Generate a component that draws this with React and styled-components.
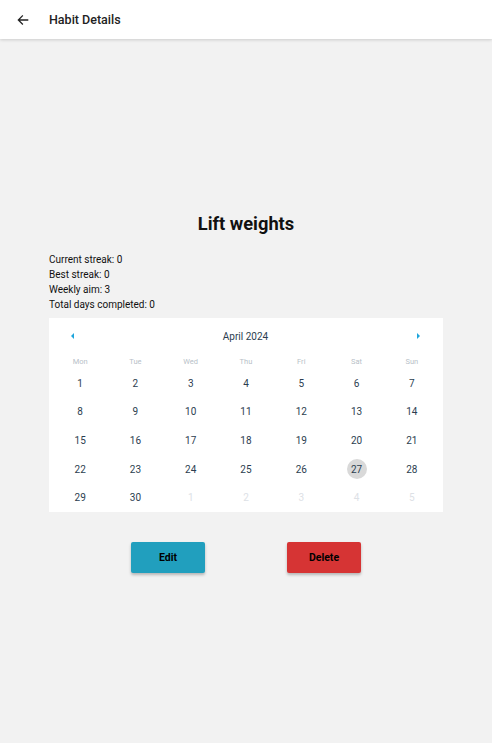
import React from "react";
import styled, { createGlobalStyle } from "styled-components";

const Global = createGlobalStyle`
  html, body { margin: 0; padding: 0; background: #f2f2f2; }
  body { font-family: Roboto, "Noto Sans", Arial, sans-serif; }
  * { box-sizing: border-box; }
`;

const Page = styled.div`
  width: 492px;
  min-height: 743px;
  background: #f2f2f2;
`;

const Header = styled.header`
  height: 39px;
  background: #fff;
  display: flex;
  align-items: center;
  padding-left: 15px;
  box-shadow: 0 1px 3px rgba(0, 0, 0, 0.16);
  position: relative;
  z-index: 1;
`;

const BackButton = styled.button`
  width: 16px;
  height: 16px;
  border: none;
  background: none;
  padding: 0;
  display: flex;
  align-items: center;
  justify-content: center;
  margin-right: 18px;
`;

const HeaderTitle = styled.h1`
  margin: 0;
  font-size: 12.5px;
  font-weight: 500;
  color: #222;
`;

const Main = styled.main`
  padding: 174px 49px 0;
  display: flex;
  flex-direction: column;
`;

const Title = styled.h2`
  margin: 0;
  text-align: center;
  font-size: 18.3px;
  line-height: 22px;
  font-weight: 700;
  color: #111;
`;

const Stats = styled.div`
  margin-top: 17px;
  display: flex;
  flex-direction: column;
`;

const Stat = styled.div`
  font-size: 10px;
  line-height: 15px;
  color: #111;
`;

const Calendar = styled.div`
  margin-top: 6px;
  background: #fff;
  padding: 8px 3.5px 0;
`;

const MonthBar = styled.div`
  height: 20px;
  display: flex;
  align-items: center;
  justify-content: space-between;
  padding: 0 19px 0 18px;
`;

const Arrow = styled.span`
  width: 0;
  height: 0;
  border-top: 3.5px solid transparent;
  border-bottom: 3.5px solid transparent;
  ${(p) =>
    p.$dir === "left"
      ? "border-right: 3.5px solid #1ea5dc;"
      : "border-left: 3.5px solid #1ea5dc;"}
`;

const MonthLabel = styled.span`
  font-size: 10px;
  color: #2c3e50;
`;

const Grid = styled.div`
  display: grid;
  grid-template-columns: repeat(7, 1fr);
`;

const Weekday = styled.div`
  height: 16px;
  margin-top: 7px;
  display: flex;
  align-items: center;
  justify-content: center;
  font-size: 7.5px;
  color: #b8bfc8;
`;

const DayCell = styled.div`
  height: 28.6px;
  display: flex;
  align-items: center;
  justify-content: center;
`;

const DayNum = styled.span`
  width: 20px;
  height: 20px;
  border-radius: 50%;
  display: flex;
  align-items: center;
  justify-content: center;
  font-size: 10px;
  color: ${(p) => (p.$muted ? "#dde1e6" : "#2c3e50")};
  background: ${(p) => (p.$selected ? "#d9d9d9" : "transparent")};
`;

const Actions = styled.div`
  margin-top: 30px;
  display: flex;
  justify-content: center;
  gap: 82px;
`;

const ActionButton = styled.button`
  width: 74px;
  height: 31px;
  border: none;
  border-radius: 2px;
  background: ${(p) => p.$bg};
  color: #000;
  font-family: Roboto, Arial, sans-serif;
  font-weight: 700;
  font-size: 10.5px;
  box-shadow: 0 2px 3px rgba(0, 0, 0, 0.25);
`;

const weekdays = ["Mon", "Tue", "Wed", "Thu", "Fri", "Sat", "Sun"];

const days = [];
for (let i = 1; i <= 30; i++) days.push({ n: i });
for (let i = 1; i <= 5; i++) days.push({ n: i, muted: true });

export default function App() {
  return (
    <Page>
      <Global />
      <Header>
        <BackButton aria-label="Back">
          <svg width="14" height="14" viewBox="0 0 24 24" fill="none" stroke="#222" strokeWidth="2.2" strokeLinecap="square">
            <path d="M20 12H5M11 5l-7 7 7 7" />
          </svg>
        </BackButton>
        <HeaderTitle>Habit Details</HeaderTitle>
      </Header>
      <Main>
        <Title>Lift weights</Title>
        <Stats>
          <Stat>Current streak: 0</Stat>
          <Stat>Best streak: 0</Stat>
          <Stat>Weekly aim: 3</Stat>
          <Stat>Total days completed: 0</Stat>
        </Stats>
        <Calendar>
          <MonthBar>
            <Arrow $dir="left" />
            <MonthLabel>April 2024</MonthLabel>
            <Arrow $dir="right" />
          </MonthBar>
          <Grid>
            {weekdays.map((d) => (
              <Weekday key={d}>{d}</Weekday>
            ))}
            {days.map((d, i) => (
              <DayCell key={i}>
                <DayNum $muted={d.muted} $selected={!d.muted && d.n === 27}>
                  {d.n}
                </DayNum>
              </DayCell>
            ))}
          </Grid>
        </Calendar>
        <Actions>
          <ActionButton $bg="#219fbe">Edit</ActionButton>
          <ActionButton $bg="#d63434">Delete</ActionButton>
        </Actions>
      </Main>
    </Page>
  );
}
